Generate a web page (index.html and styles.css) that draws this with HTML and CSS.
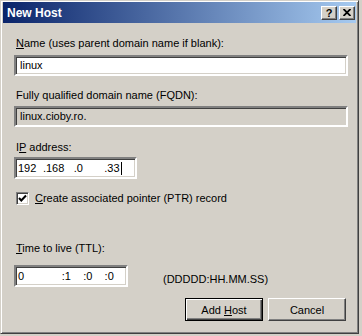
FILE: index.html
```html
<!DOCTYPE html>
<html lang="en">
<head>
  <meta charset="UTF-8">
  <title>New Host</title>
  <link rel="stylesheet" href="styles.css">
</head>
<body>
  <div class="window">
    <div class="titlebar">
      <span class="title">New Host</span>
      <div class="title-buttons">
        <span class="tbtn help">?</span>
        <span class="tbtn close">
          <svg width="8" height="7" viewBox="0 0 8 7">
            <path d="M0.5 0 L7.5 7 M7.5 0 L0.5 7" stroke="#000" stroke-width="1.8"/>
          </svg>
        </span>
      </div>
    </div>

    <div class="content">
      <div class="label first"><u>N</u>ame (uses parent domain name if blank):</div>
      <div class="edit">linux</div>

      <div class="label fqdn-label">Fully qualified domain name (FQDN):</div>
      <div class="edit readonly">linux.cioby.ro.</div>

      <div class="label ip-label">I<u>P</u> address:</div>
      <div class="edit ip">
        <span class="field f-first">192</span>
        <span class="field">.168</span>
        <span class="field">.0</span>
        <span class="field last">.33<span class="caret"></span></span>
      </div>

      <div class="check-row">
        <span class="checkbox">
          <svg width="9" height="9" viewBox="0 0 9 9">
            <path d="M1 4 L3.3 6.5 L8 1.5" stroke="#000" stroke-width="2" fill="none"/>
          </svg>
        </span>
        <span><u>C</u>reate associated pointer (PTR) record</span>
      </div>

      <div class="label ttl-label"><u>T</u>ime to live (TTL):</div>
      <div class="ttl-row">
        <div class="edit ttl">
          <span class="tfield t-first">0</span>
          <span class="tfield t-mid">:1</span>
          <span class="tfield t-mid">:0</span>
          <span class="tfield">:0</span>
        </div>
        <span class="format">(DDDDD:HH.MM.SS)</span>
      </div>

      <div class="actions">
        <button class="default">Add <u>H</u>ost</button>
        <button>Cancel</button>
      </div>
    </div>
  </div>
</body>
</html>
```

FILE: styles.css
```css
body {
  margin: 0;
  background: #d4d0c8;
  font-family: "Liberation Sans", Arial, sans-serif;
  font-size: 11px;
  color: #000;
}
.window {
  box-sizing: border-box;
  width: 359px;
  height: 334px;
  padding: 1px 2px 2px 2px;
  background: #d4d0c8;
  border: 1px solid;
  border-color: #d4d0c8 #404040 #404040 #d4d0c8;
  box-shadow: inset 1px 1px #fff, inset -1px -1px #808080;
}
.titlebar {
  height: 21px;
  display: flex;
  align-items: center;
  justify-content: space-between;
  padding: 0 1px 0 4px;
  background: linear-gradient(to right, #0a246a, #a6caf0);
}
.title {
  color: #fff;
  font-weight: bold;
  font-size: 12px;
}
.title-buttons {
  display: flex;
  gap: 2px;
}
.tbtn {
  box-sizing: border-box;
  width: 16px;
  height: 14px;
  display: flex;
  align-items: center;
  justify-content: center;
  background: #d4d0c8;
  border: 1px solid;
  border-color: #fff #404040 #404040 #fff;
  box-shadow: inset -1px -1px #808080;
}
.help {
  font-weight: bold;
  font-size: 11px;
  line-height: 12px;
}
.content {
  padding: 14px 8px 0 11px;
}
.label {
  line-height: 13px;
  padding-left: 2px;
}
.edit {
  box-sizing: border-box;
  height: 21px;
  line-height: 17px;
  padding: 0 4px;
  background: #fff;
  border: 2px solid;
  border-color: #808080 #fff #fff #808080;
  box-shadow: inset 1px 1px #404040, inset -1px -1px #d4d0c8;
  white-space: nowrap;
}
.label.first + .edit {
  margin-top: 5px;
}
.fqdn-label {
  margin-top: 13px;
}
.readonly {
  margin-top: 4px;
  background: #d4d0c8;
}
.ip-label {
  margin-top: 14px;
}
.ip {
  margin-top: 3px;
  width: 123px;
  height: 22px;
  padding: 0 0 0 2px;
  display: flex;
  align-items: center;
}
.field {
  width: 32px;
}
.f-first {
  width: 26px;
}
.field.last {
  display: flex;
  align-items: center;
}
.caret {
  display: inline-block;
  width: 1px;
  height: 13px;
  background: #000;
  margin-left: 1px;
}
.check-row {
  margin-top: 13px;
  display: flex;
  align-items: center;
  gap: 6px;
  padding-left: 2px;
  line-height: 13px;
}
.checkbox {
  box-sizing: border-box;
  width: 13px;
  height: 13px;
  display: flex;
  align-items: center;
  justify-content: center;
  background: #fff;
  border: 1px solid;
  border-color: #808080 #fff #fff #808080;
  box-shadow: inset 1px 1px #404040, inset -1px -1px #d4d0c8;
}
.ttl-label {
  margin-top: 37px;
}
.ttl-row {
  margin-top: 10px;
  display: flex;
  align-items: center;
}
.ttl {
  width: 114px;
  height: 22px;
  padding: 0 0 0 2px;
  display: flex;
  align-items: center;
}
.tfield {
  width: 22px;
}
.t-first {
  width: 45px;
}
.format {
  margin-left: 35px;
  padding-top: 5px;
}
.actions {
  margin-top: 11px;
  display: flex;
  justify-content: flex-end;
  gap: 5px;
  padding-right: 2px;
}
button {
  box-sizing: border-box;
  width: 78px;
  height: 23px;
  padding: 0;
  font-family: inherit;
  font-size: 11px;
  color: #000;
  background: #d4d0c8;
  border: 1px solid;
  border-color: #fff #404040 #404040 #fff;
  box-shadow: inset -1px -1px #808080;
}
button.default {
  border: 1px solid #000;
  box-shadow: inset 1px 1px #fff, inset -1px -1px #404040, inset -2px -2px #808080;
}
```
